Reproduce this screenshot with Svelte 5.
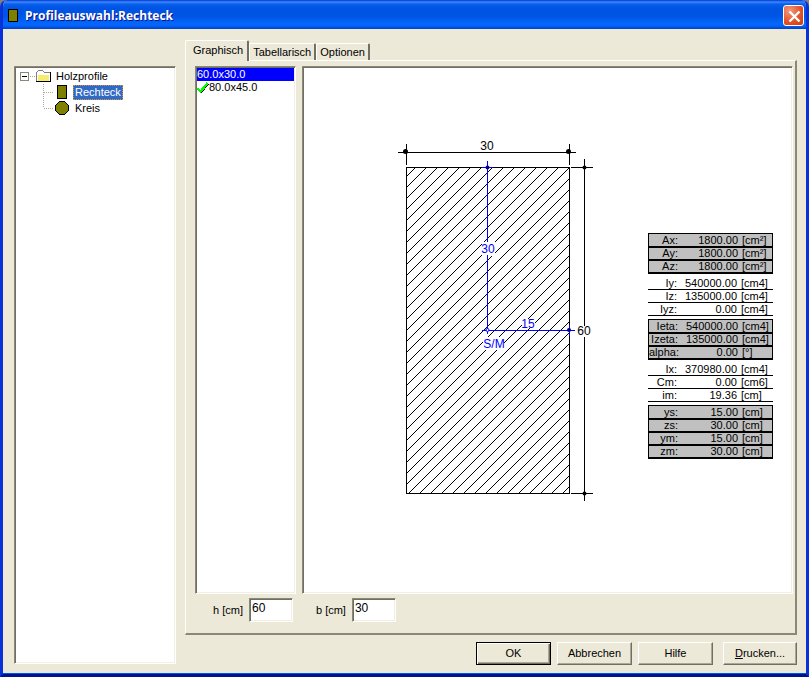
<script>
  let tab = $state('Graphisch');
  let size = $state('60.0x30.0');
  let height = $state('60');
  let width = $state('30');

  const tabs = ['Graphisch', 'Tabellarisch', 'Optionen'];
  const sizes = [
    { name: '60.0x30.0', checked: false },
    { name: '80.0x45.0', checked: true }
  ];
  const groups = [
    { shaded: true, rows: [['Ax:', '1800.00', '[cm²]'], ['Ay:', '1800.00', '[cm²]'], ['Az:', '1800.00', '[cm²]']] },
    { shaded: false, rows: [['Iy:', '540000.00', '[cm4]'], ['Iz:', '135000.00', '[cm4]'], ['Iyz:', '0.00', '[cm4]']] },
    { shaded: true, rows: [['Ieta:', '540000.00', '[cm4]'], ['Izeta:', '135000.00', '[cm4]'], ['alpha:', '0.00', '[°]']] },
    { shaded: false, rows: [['Ix:', '370980.00', '[cm4]'], ['Cm:', '0.00', '[cm6]'], ['im:', '19.36', '[cm]']] },
    { shaded: true, rows: [['ys:', '15.00', '[cm]'], ['zs:', '30.00', '[cm]'], ['ym:', '15.00', '[cm]'], ['zm:', '30.00', '[cm]']] }
  ];

  // Hatching: 45 degree lines, 11 units apart, clipped to the section.
  const box = { left: 10, top: 29, right: 173, bottom: 355 };
  const hatch = [];
  for (let s = 48; s < box.right + box.bottom; s += 11) {
    const x1 = Math.max(box.left, s - box.bottom);
    const x2 = Math.min(box.right, s - box.top);
    hatch.push({ x1, y1: s - x1, x2, y2: s - x2 });
  }
</script>

<div class="window">
  <header>
    <svg class="app-icon" width="12" height="16" viewBox="0 0 12 16" aria-hidden="true">
      <rect x="1.500" y="1.500" width="9" height="12" fill="#808000" stroke="#000" />
    </svg>
    <h1>Profileauswahl:Rechteck</h1>
    <button class="close" aria-label="Schließen">
      <svg width="21" height="21" viewBox="0 0 21 21" aria-hidden="true">
        <path d="M5.500 5.500L15.500 15.500M15.500 5.500L5.500 15.500" stroke="#fff" stroke-width="2.400" />
      </svg>
    </button>
  </header>

  <div class="body">
    <nav class="sunken tree" aria-label="Profile">
      <ul>
        <li>
          <div class="node root">
            <svg width="38" height="16" viewBox="0 0 38 16" shape-rendering="crispEdges" aria-hidden="true">
              <rect x="4.500" y="4.500" width="8" height="8" fill="#fff" stroke="#8a8876" />
              <path d="M6 8.500h5" stroke="#000" />
              <path d="M14 8.500h6" stroke="#aca899" stroke-dasharray="1 1" />
              <path d="M21 4l2-2h4l2 2h5v9H21z" fill="#fff" />
              <path d="M20.500 13V4.500l2-2h4l2 2h5" fill="none" stroke="#808080" />
              <path d="M22 6h11v7H22z" fill="#f5ec70" />
              <path d="M22 6.500h11" stroke="#fff" />
              <path d="M20 13.500h14.500V4" fill="none" stroke="#000" />
            </svg>
            <span>Holzprofile</span>
          </div>
          <ul>
            <li class="node">
              <svg width="57" height="16" viewBox="0 0 57 16" shape-rendering="crispEdges" aria-hidden="true">
                <path d="M27.500 0v16M28 8.500h10" stroke="#aca899" stroke-dasharray="1 1" />
                <rect x="41.500" y="1.500" width="9" height="13" fill="#808000" stroke="#000" />
              </svg>
              <span class="chosen">Rechteck</span>
            </li>
            <li class="node">
              <svg width="57" height="16" viewBox="0 0 57 16" shape-rendering="crispEdges" aria-hidden="true">
                <path d="M27.500 0v8M28 8.500h10" stroke="#aca899" stroke-dasharray="1 1" />
                <path d="M43.500 1.500h5l4 4v5l-4 4h-5l-4-4v-5z" fill="#808000" stroke="#000" />
              </svg>
              <span>Kreis</span>
            </li>
          </ul>
        </li>
      </ul>
    </nav>

    <main>
      <div class="tabs" role="tablist">
        {#each tabs as name}
          <button role="tab" class:active={tab === name} aria-selected={tab === name} onclick={() => (tab = name)}>{name}</button>
        {/each}
      </div>

      <section class="panel">
        <div class="views">
          <ul class="sunken sizes" role="listbox" aria-label="Größen">
            {#each sizes as s}
              <li role="option" aria-selected={size === s.name}>
                <button class:selected={size === s.name} onclick={() => (size = s.name)}>
                  {#if s.checked}
                    <svg width="12" height="12" viewBox="0 0 12 12" shape-rendering="crispEdges" aria-hidden="true">
                      <path d="M1 8l3 3L11.500 2" fill="none" stroke="#000" stroke-width="1" />
                      <path d="M0.500 6.500l3 3L10.500 1" fill="none" stroke="#00ff00" stroke-width="2.400" />
                    </svg>
                  {/if}
                  {s.name}
                </button>
              </li>
            {/each}
          </ul>

          <div class="sunken canvas">
            <svg class="drawing" width="200" height="366" viewBox="0 0 200 366" role="img" aria-label="Querschnitt 30 x 60">
              <g stroke="#000" shape-rendering="crispEdges">
                {#each hatch as l}
                  <line x1={l.x1 + 0.5} y1={l.y1 + 0.5} x2={l.x2 + 0.5} y2={l.y2 + 0.5} />
                {/each}
              </g>
              <rect x="86" y="104" width="13" height="14" fill="#fff" />
              <rect x="87" y="199" width="21" height="13" fill="#fff" />
              <rect x="126" y="181" width="13" height="9" fill="#fff" />
              <g fill="none" stroke="#000" shape-rendering="crispEdges">
                <rect x="10.500" y="29.500" width="163" height="326" />
                <path d="M2 14.500h178M10.500 6v21M173.500 6v21" />
                <path d="M188.500 21v167M188.500 199v164M175 29.500h22M175 355.500h22" />
              </g>
              <circle cx="9.500" cy="13.500" r="2.500" />
              <circle cx="172.500" cy="13.500" r="2.500" />
              <circle cx="188.500" cy="29.500" r="2" />
              <circle cx="188.500" cy="355.500" r="2" />
              <g fill="none" stroke="#00f" shape-rendering="crispEdges">
                <path d="M91.500 23v81M91.500 117v79M86 29.500h11M86 192.500h93M173.500 187v11" />
              </g>
              <circle cx="91.500" cy="29.500" r="2" fill="#00008b" />
              <circle cx="173" cy="192" r="2" fill="#00008b" />
              <circle cx="91.500" cy="192" r="1.500" fill="#fff" stroke="#00f" />
              <text x="91" y="12">30</text>
              <text x="188" y="197">60</text>
              <g class="inner">
                <text x="92" y="115">30</text>
                <text x="132" y="190">15</text>
                <text x="98" y="210">S/M</text>
              </g>
            </svg>

            <div class="values">
              {#each groups as g}
                <table class:shaded={g.shaded}>
                  <tbody>
                    {#each g.rows as [label, value, unit]}
                      <tr><th scope="row">{label}</th><td class="num">{value}</td><td>{unit}</td></tr>
                    {/each}
                  </tbody>
                </table>
              {/each}
            </div>
          </div>
        </div>

        <div class="fields">
          <label for="h">h [cm]</label>
          <input id="h" class="sunken" bind:value={height} />
          <label for="b">b [cm]</label>
          <input id="b" class="sunken" bind:value={width} />
        </div>
      </section>
    </main>
  </div>

  <footer>
    <button class="push default">OK</button>
    <button class="push">Abbrechen</button>
    <button class="push">Hilfe</button>
    <button class="push print"><u>D</u>rucken...</button>
  </footer>
</div>

<style>
  :global(body) {
    margin: 0;
    background: #808080;
  }
  * {
    box-sizing: border-box;
  }
  .window {
    display: flex;
    flex-direction: column;
    min-height: 100vh;
    border: solid #0831d9;
    border-width: 0 3px 3px;
    border-bottom-color: #00138c;
    border-radius: 7px 7px 0 0;
    box-shadow: inset 0 -1px #0054e3;
    background: #ece9d8;
    color: #000;
    font: 11px/13px "Liberation Sans", Arial, sans-serif;
    overflow: hidden;
  }
  ul {
    list-style: none;
    margin: 0;
    padding: 0;
  }
  button {
    font: inherit;
    color: inherit;
    padding: 0;
  }
  header {
    display: flex;
    align-items: center;
    height: 29px;
    padding: 2px 3px 0 5px;
    margin: 0 -1px;
    background: linear-gradient(#0831d9 0, #3a8cf8 2px, #0a60ee 4px, #0054e3 8px, #0054e3 16px, #0468ff 24px, #0460f4 26px, #003fc8 29px);
  }
  h1 {
    flex: 1;
    margin: 0 0 0 6px;
    color: #fff;
    font: bold 12px/20px "Open Sans", "Noto Sans", sans-serif;
    text-shadow: 1px 1px #0f1089;
  }
  .close {
    width: 21px;
    height: 21px;
    border: 1px solid #fff;
    border-radius: 3px;
    background: radial-gradient(circle at 30% 25%, #f09a80, #e5532a 55%, #c93a10);
    display: grid;
    place-items: center;
  }
  .body {
    flex: 1;
    display: flex;
    gap: 9px;
    padding: 11px 9px 0 11px;
  }
  .sunken {
    background: #fff;
    border: 1px solid;
    border-color: #8a8877 #fff #fff #8a8877;
    box-shadow: inset 1px 1px #716f64, inset -1px -1px #f1efe2;
  }
  .tree {
    width: 162px;
    margin: 26px 0 -29px;
    padding: 1px;
  }
  .node {
    display: flex;
    align-items: center;
    height: 16px;
  }
  .node span {
    padding: 1px 2px;
  }
  .node .chosen {
    background: #316ac5;
    color: #fff;
    outline: 1px dotted #ce953a;
    outline-offset: -1px;
  }
  main {
    flex: 1;
    display: flex;
    flex-direction: column;
  }
  .tabs {
    display: flex;
    align-items: flex-end;
    height: 20px;
    padding-left: 1px;
  }
  .tabs button {
    height: 17px;
    padding: 0 3px;
    border: solid;
    border-width: 1px 2px 0 1px;
    border-color: #fff #716f64 #fff #fff;
    border-radius: 2px 2px 0 0;
    background: #ece9d8;
  }
  .tabs .active {
    position: relative;
    height: 21px;
    margin: 0 0 -1px -1px;
    padding: 0 4px 2px 7px;
  }
  .panel {
    flex: 1;
    display: flex;
    flex-direction: column;
    padding: 5px 2px 11px 9px;
    border: solid;
    border-width: 1px 2px 2px 1px;
    border-color: #fff #8a8877 #8a8877 #fff;
  }
  .views {
    flex: 1;
    display: flex;
    gap: 6px;
  }
  .sizes {
    width: 101px;
    padding: 1px;
  }
  .sizes button {
    display: flex;
    align-items: center;
    width: 100%;
    height: 13px;
    border: 0;
    background: none;
    text-align: left;
  }
  .sizes .selected {
    background: #00f;
    color: #fff;
  }
  .canvas {
    flex: 1;
    display: flex;
    justify-content: flex-end;
    align-items: flex-start;
    gap: 52px;
    padding: 71px 19px 0 0;
  }
  .drawing text {
    font-size: 12px;
    text-anchor: middle;
  }
  .drawing .inner text {
    fill: #00f;
  }
  .values {
    display: flex;
    flex-direction: column;
    gap: 3px;
    width: 125px;
    margin-top: 95px;
  }
  table {
    width: 100%;
    table-layout: fixed;
    border-spacing: 0;
  }
  th,
  td {
    height: 13px;
    padding: 0;
    border-bottom: 1px solid #000;
    font-weight: normal;
    line-height: 11px;
    text-align: left;
    white-space: nowrap;
  }
  th {
    width: 29px;
    text-align: right;
  }
  .num {
    width: 60px;
    text-align: right;
  }
  td:last-child {
    padding-left: 4px;
  }
  .shaded {
    background: #c0c0c0;
    border: solid #000;
    border-width: 1px 1px 0;
  }
  .shaded th,
  .shaded td {
    border-bottom-width: 2px;
  }
  .shaded tr:first-child > * {
    height: 14px;
  }
  .fields {
    display: flex;
    align-items: center;
    padding: 4px 0 0 18px;
  }
  .fields input {
    width: 44px;
    height: 24px;
    margin: 0 23px 0 6px;
    padding: 0 2px 4px;
    font: inherit;
    font-size: 12px;
  }
  .fields label {
    min-width: 29px;
  }
  footer {
    display: flex;
    justify-content: flex-end;
    gap: 6px;
    padding: 7px 9px 9px;
  }
  .push {
    width: 75px;
    height: 23px;
    border: 1px solid;
    border-color: #fff #716f64 #716f64 #fff;
    box-shadow: inset -1px -1px #aca899;
    background: #ece9d8;
  }
  .default {
    border-color: #000;
    box-shadow: inset 1px 1px #fff, inset -1px -1px #716f64, inset -2px -2px #aca899;
  }
  .print {
    width: 74px;
    margin-left: 4px;
  }
</style>
